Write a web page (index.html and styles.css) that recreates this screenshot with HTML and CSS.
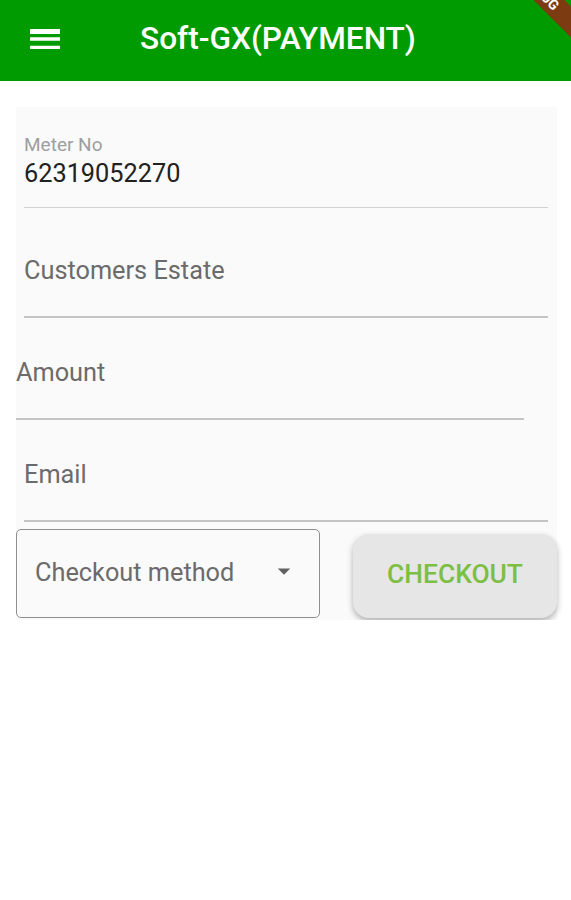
FILE: index.html
```html
<!DOCTYPE html>
<html lang="en">
<head>
  <meta charset="UTF-8">
  <meta name="viewport" content="width=device-width, initial-scale=1.0">
  <title>Soft-GX(PAYMENT)</title>
  <link rel="stylesheet" href="styles.css">
</head>
<body>
<header class="appbar">
  <svg class="menu-icon" viewBox="0 0 24 24" width="40" height="40">
    <path fill="#fff" d="M3 18h18v-2H3v2zm0-5h18v-2H3v2zm0-6v2h18V6H3z"/>
  </svg>
  <h1 class="title">Soft-GX(PAYMENT)</h1>
  <div class="debug-banner">DEBUG</div>
</header>

<form class="card">
  <div class="field field-meter">
    <label class="float-label">Meter No</label>
    <div class="value">62319052270</div>
  </div>
  <div class="field field-estate">
    <div class="hint">Customers Estate</div>
  </div>
  <div class="field field-amount">
    <div class="hint">Amount</div>
  </div>
  <div class="field field-email">
    <div class="hint">Email</div>
  </div>

  <div class="actions">
    <div class="dropdown">
      <span class="hint">Checkout method</span>
      <svg class="arrow" viewBox="0 0 24 24" width="30" height="30">
        <path fill="#616161" d="M7 10l5 5 5-5z"/>
      </svg>
    </div>
    <button type="button" class="checkout-btn">CHECKOUT</button>
  </div>
</form>
</body>
</html>
```

FILE: styles.css
```css
body {
  margin: 0;
  font-family: Roboto, "Noto Sans", sans-serif;
  background-color: #fff;
}
.appbar {
  position: relative;
  overflow: hidden;
  height: 81px;
  background-color: #009b00;
  display: flex;
  align-items: center;
  padding-left: 25px;
}
.menu-icon {
  display: block;
  margin-top: -3px;
}
.title {
  margin: -3px 0 0 75px;
  color: #fff;
  font-size: 31.6px;
  font-weight: 500;
  line-height: 1;
}
.debug-banner {
  position: absolute;
  left: 461px;
  top: -19px;
  width: 160px;
  height: 22px;
  line-height: 22px;
  background-color: #7d3b12;
  color: #fff;
  font-size: 14px;
  font-weight: bold;
  text-align: center;
  transform: rotate(45deg);
}
.card {
  margin: 26px 14px 0 16px;
  padding: 0 9px 2px 8px;
  background-color: #fafafa;
}
.field {
  border-bottom: 2px solid #c4c4c4;
}
.field-meter {
  padding: 26.6px 0 17px;
  border-bottom: 1.5px solid #d2d2d2;
}
.field-estate {
  padding: 48.7px 0 29.4px;
}
.field-amount {
  padding: 40.2px 0 29.4px;
  margin-left: -8px;
  margin-right: 24px;
}
.field-email {
  padding: 40.2px 0 29.4px;
}
.float-label {
  display: block;
  font-size: 19px;
  line-height: 1.2;
  color: #9e9e9e;
  margin-bottom: 2.8px;
}
.value {
  font-size: 25.3px;
  line-height: 1.2;
  color: #212121;
}
.hint {
  font-size: 25.3px;
  line-height: 1.2;
  color: #6b6b6b;
}
.actions {
  display: flex;
  align-items: flex-end;
  justify-content: space-between;
  margin: 7px -9px 0 -8px;
}
.dropdown {
  box-sizing: border-box;
  width: 304px;
  height: 89px;
  border: 1.5px solid #8f8f8f;
  border-radius: 5px;
  display: flex;
  align-items: center;
  padding: 0 20px 0 18px;
}
.arrow {
  margin-left: auto;
  margin-top: -4px;
}
.checkout-btn {
  width: 204px;
  height: 84px;
  padding: 0 0 3px;
  border: none;
  border-radius: 16px;
  background-color: #e6e6e6;
  box-shadow: 0 3px 6px rgba(0, 0, 0, 0.3);
  color: #7cbf43;
  font-family: Roboto, sans-serif;
  font-size: 26.4px;
  font-weight: 500;
  cursor: pointer;
}
```
